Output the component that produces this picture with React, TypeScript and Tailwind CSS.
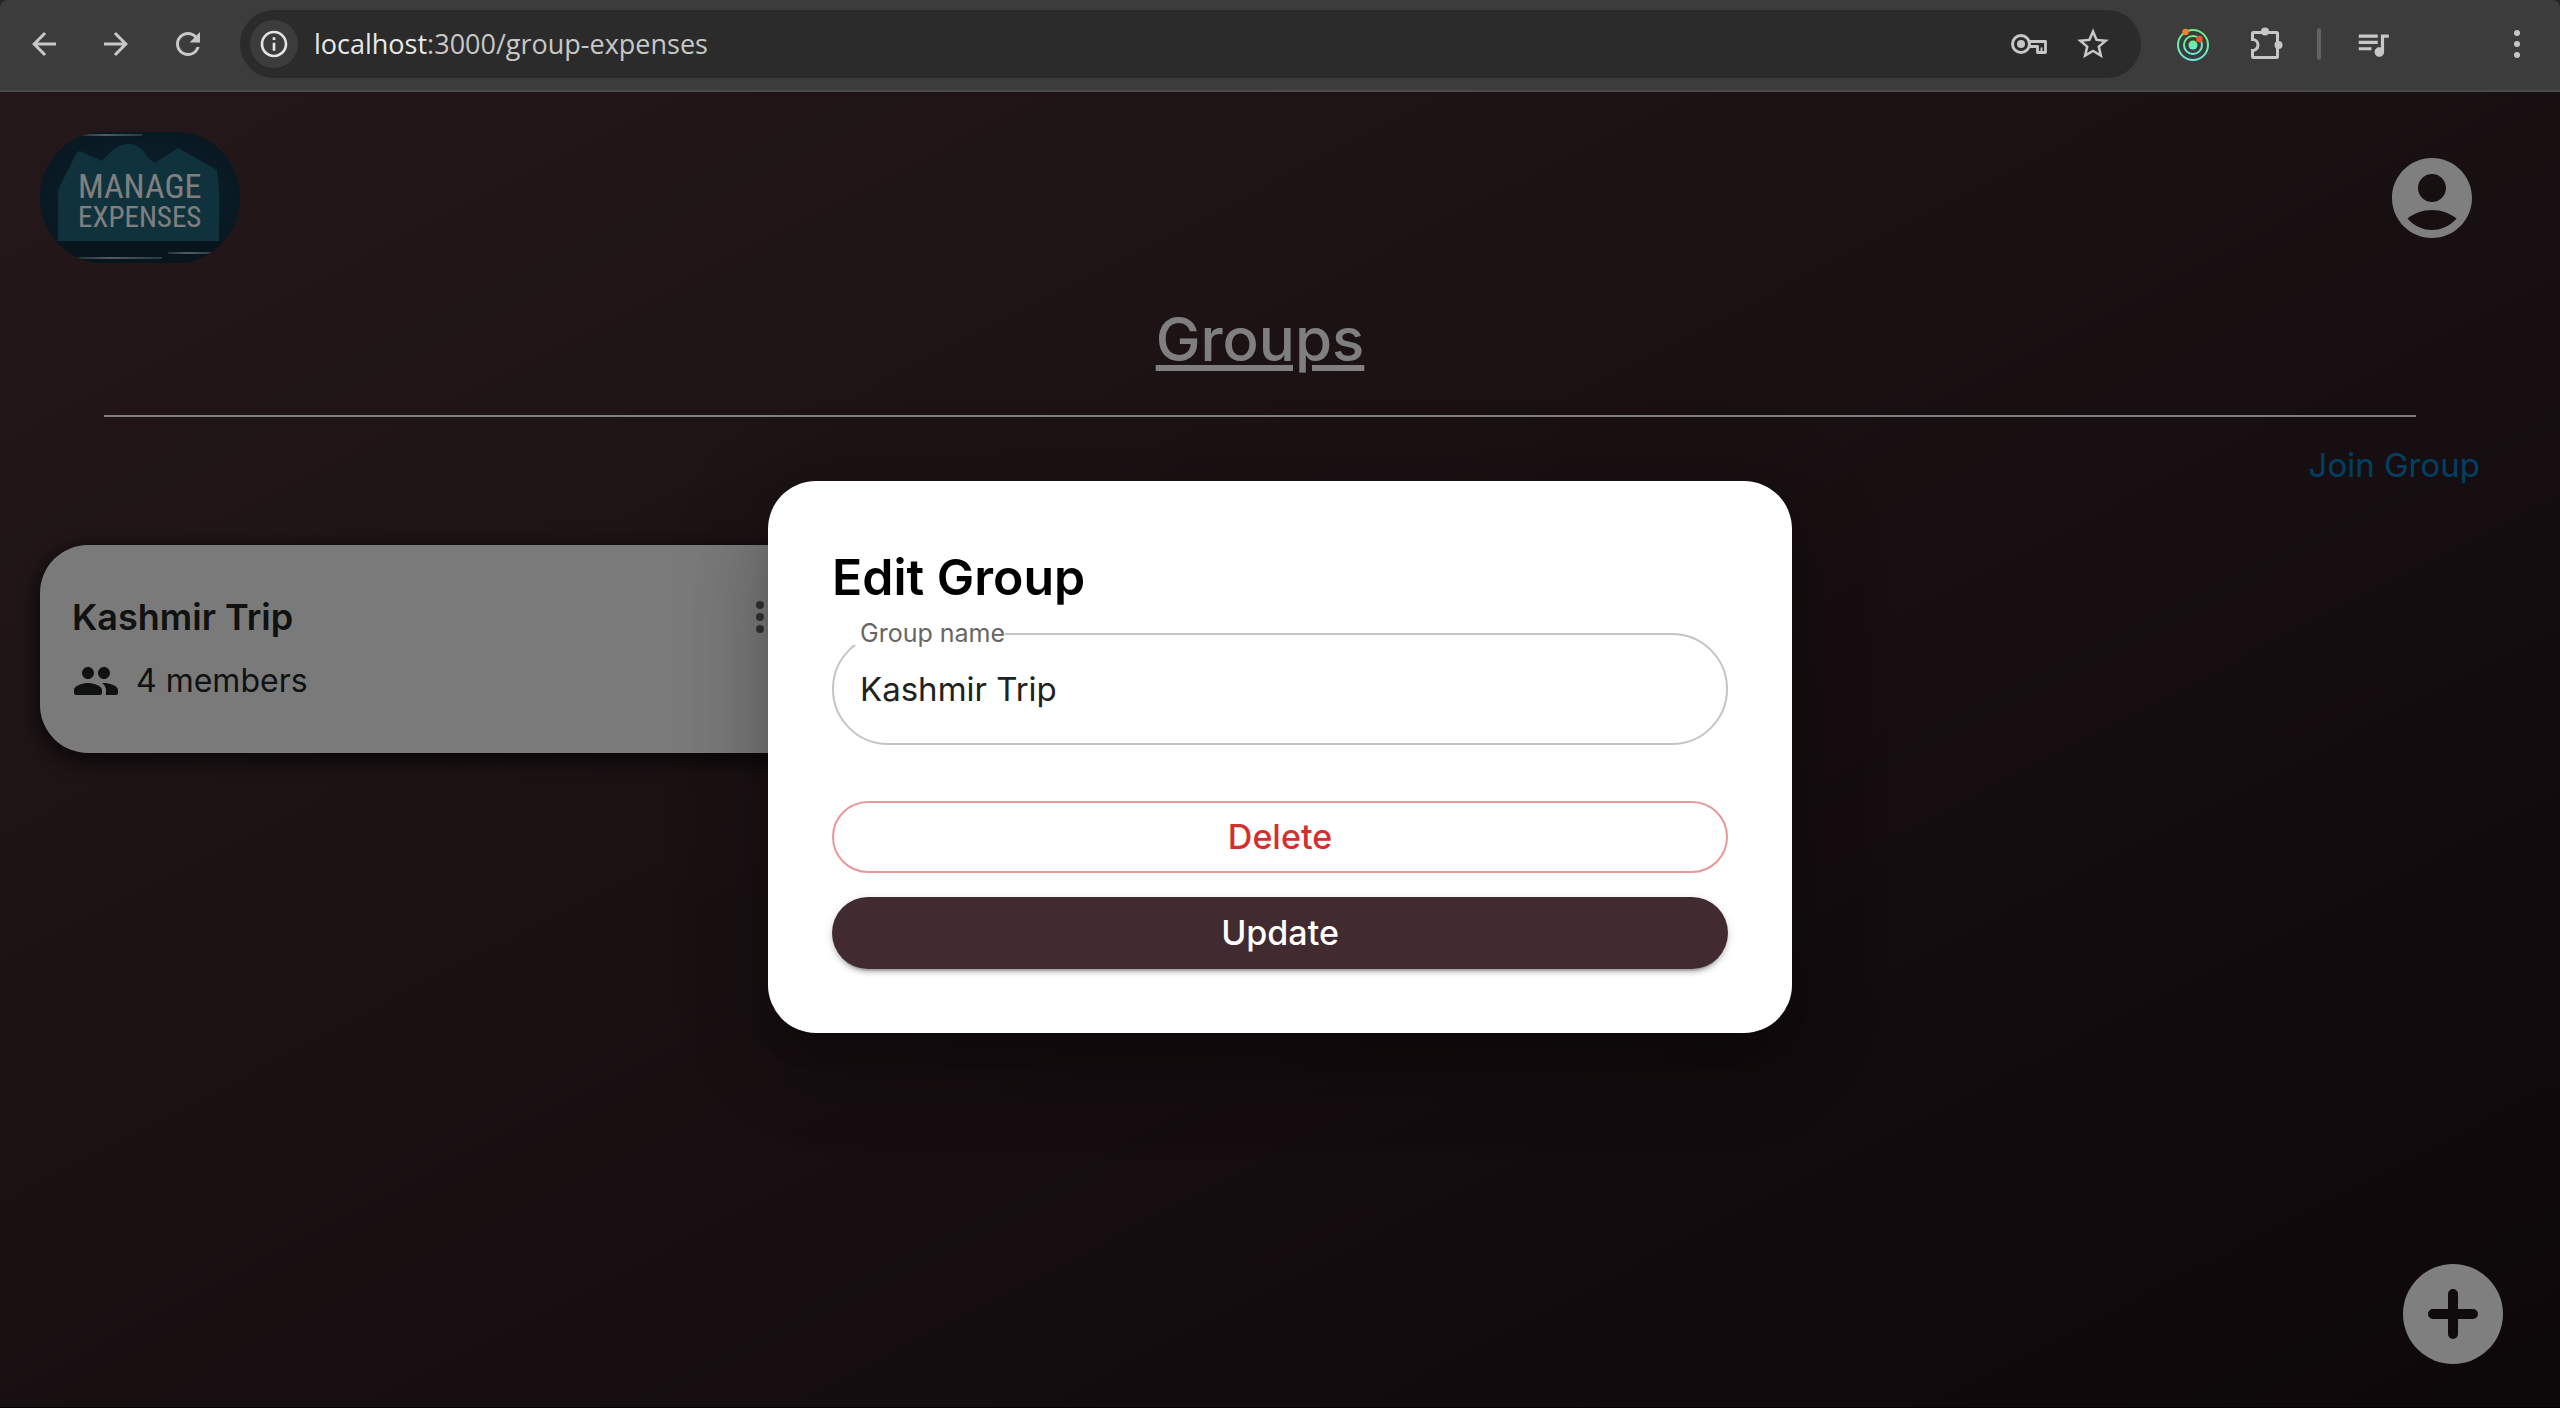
import type { ReactNode } from "react";
import {
  MdArrowBack,
  MdArrowForward,
  MdInfoOutline,
  MdQueueMusic,
  MdRefresh,
  MdStarBorder,
} from "react-icons/md";

function IconButton({
  label,
  className = "",
  children,
}: {
  label: string;
  className?: string;
  children: ReactNode;
}) {
  return (
    <button
      type="button"
      aria-label={label}
      className={`flex shrink-0 items-center justify-center ${className}`}
    >
      {children}
    </button>
  );
}

function KeyIcon() {
  return (
    <svg width="38" height="22" viewBox="0 0 38 22" fill="none" stroke="currentColor">
      <circle cx="11" cy="11" r="8.5" strokeWidth="3" />
      <circle cx="11" cy="11" r="4" fill="currentColor" stroke="none" />
      <path d="M18.5 8.5H35.5V19.5H27.5V13.5H18.5" strokeWidth="2.8" strokeLinejoin="round" />
      <path d="M31.5 14.5V19" strokeWidth="2" />
    </svg>
  );
}

function RadarIcon() {
  return (
    <svg width="32" height="34" viewBox="0 0 32 34" fill="none">
      <defs>
        <linearGradient id="radar" x1="0" y1="0" x2="0" y2="1">
          <stop offset="0" stopColor="#6ff07c" />
          <stop offset="1" stopColor="#6ae8dc" />
        </linearGradient>
      </defs>
      <circle cx="16" cy="18" r="15" stroke="url(#radar)" strokeWidth="2" />
      <circle cx="16" cy="18" r="9" stroke="url(#radar)" strokeWidth="2" />
      <circle cx="16" cy="18" r="4.5" fill="url(#radar)" />
      <circle cx="8.5" cy="5" r="3.2" fill="#f5802c" />
      <circle cx="22.5" cy="12" r="3.2" fill="#f0532d" />
    </svg>
  );
}

function PuzzleIcon() {
  return (
    <svg width="34" height="34" viewBox="0 0 34 34" fill="none">
      <path
        d="M2.5 12.5V6.5Q2.5 5.5 3.5 5.5H26.5Q27.5 5.5 27.5 6.5V29.5Q27.5 30.5 26.5 30.5H3.5Q2.5 30.5 2.5 29.5V23.5A5.5 5.5 0 0 0 2.5 12.5Z"
        stroke="currentColor"
        strokeWidth="3"
      />
      <path d="M2.5 14.2V21.8" stroke="#3c3c3c" strokeWidth="3.4" />
      <circle cx="15" cy="4.5" r="4" fill="currentColor" />
      <circle cx="28.5" cy="18" r="4" fill="currentColor" />
    </svg>
  );
}

function DotsIcon() {
  return (
    <svg width="32" height="32" viewBox="0 0 32 32" fill="currentColor">
      <circle cx="16" cy="5" r="3" />
      <circle cx="16" cy="16" r="3" />
      <circle cx="16" cy="27" r="3" />
    </svg>
  );
}

function BrowserBar() {
  return (
    <div className="shrink-0 bg-[#252525]">
      <div className="flex h-[92px] items-center rounded-t-lg border-b-2 border-[#4a4a4a] bg-[#3c3c3c] pb-0.5 pl-6 text-[#c7c7c7]">
        <div className="flex items-center gap-8">
          <IconButton label="Back" className="size-10">
            <MdArrowBack size={36} />
          </IconButton>
          <IconButton label="Forward" className="size-10">
            <MdArrowForward size={36} />
          </IconButton>
          <IconButton label="Reload" className="size-10">
            <MdRefresh size={36} />
          </IconButton>
        </div>
        <div className="ml-8 flex h-[68px] flex-1 items-center rounded-full bg-[#2b2b2b] pr-7 pl-[10px]">
          <IconButton label="Site information" className="size-12 rounded-full bg-[#3c3c3c] text-[#e3e3e3]">
            <MdInfoOutline size={32} />
          </IconButton>
          <div className="ml-4 flex-1 font-['Open_Sans',sans-serif] text-[27px] leading-9 text-[#c7c7c7]">
            <span className="text-[#e8e8e8]">localhost</span>:3000/group-expenses
          </div>
          <div className="flex items-center gap-6">
            <IconButton label="Passwords" className="size-10">
              <KeyIcon />
            </IconButton>
            <IconButton label="Bookmark" className="size-10">
              <MdStarBorder size={38} />
            </IconButton>
          </div>
        </div>
        <div className="flex items-center pr-[23px] pl-8">
          <IconButton label="Radar extension" className="size-10">
            <RadarIcon />
          </IconButton>
          <IconButton label="Extensions" className="ml-[34px] size-10">
            <PuzzleIcon />
          </IconButton>
          <div className="ml-[30px] h-8 w-1 rounded-full bg-[#636363]" />
          <IconButton label="Media controls" className="ml-8 size-10">
            <MdQueueMusic size={38} />
          </IconButton>
          <IconButton label="Menu" className="ml-[104px] size-10">
            <DotsIcon />
          </IconButton>
        </div>
      </div>
    </div>
  );
}

function Logo() {
  return (
    <a href="#home" aria-label="Manage Expenses" className="h-[131px] w-[200px] overflow-hidden rounded-[64px]">
      <svg width="200" height="131" viewBox="0 0 200 131">
        <defs>
          <radialGradient id="logoBg" cx="0.5" cy="0.5" r="0.6">
            <stop offset="0" stopColor="#16425a" />
            <stop offset="0.7" stopColor="#13364a" />
            <stop offset="1" stopColor="#122d3e" />
          </radialGradient>
          <linearGradient id="logoLine" x1="0" x2="1">
            <stop offset="0" stopColor="#3d6478" />
            <stop offset="0.4" stopColor="#a5b7c0" />
            <stop offset="1" stopColor="#4f7284" />
          </linearGradient>
        </defs>
        <rect width="200" height="131" fill="url(#logoBg)" />
        <rect y="109" width="200" height="22" fill="#122a3a" />
        <path
          d="M18 109V60Q20 52 24 46L36 22Q38 18 42 20L62 29C72 18 78 12 90 12C102 12 106 26 115 31L138 16L177 38L179 60V109Z"
          fill="#216478"
        />
        <rect x="40" y="2" width="62" height="2" fill="url(#logoLine)" />
        <rect x="36" y="125" width="86" height="2" fill="url(#logoLine)" />
        <rect x="128" y="120" width="48" height="2" fill="url(#logoLine)" />
        <text x="38" y="66" fill="#ffffff" className="font-['Roboto_Condensed',sans-serif] text-[34px]">
          MANAGE
        </text>
        <text x="38" y="95" fill="#ffffff" className="font-['Roboto_Condensed',sans-serif] text-[29px]">
          EXPENSES
        </text>
      </svg>
    </a>
  );
}

function AccountIcon() {
  return (
    <svg width="96" height="96" viewBox="0 0 24 24" fill="currentColor">
      <path d="M12 2C6.48 2 2 6.48 2 12s4.48 10 10 10 10-4.48 10-10S17.52 2 12 2zm0 4c1.93 0 3.5 1.57 3.5 3.5S13.93 13 12 13s-3.5-1.57-3.5-3.5S10.07 6 12 6zm0 14c-2.03 0-4.43-.82-6.14-2.88C7.55 15.8 9.68 15 12 15s4.45.8 6.14 2.12C16.43 19.18 14.03 20 12 20z" />
    </svg>
  );
}

function MembersIcon() {
  return (
    <svg width="48" height="48" viewBox="0 0 24 24" fill="currentColor">
      <path d="M16 11c1.66 0 2.99-1.34 2.99-3S17.66 5 16 5s-3 1.34-3 3 1.34 3 3 3m-8 0c1.66 0 2.99-1.34 2.99-3S9.66 5 8 5 5 6.34 5 8s1.34 3 3 3m0 2c-2.33 0-7 1.17-7 3.5V18c0 .55.45 1 1 1h12c.55 0 1-.45 1-1v-1.5c0-2.33-4.67-3.5-7-3.5m8 0c-.29 0-.62.02-.97.05.02.01.03.03.04.04 1.14.83 1.93 1.94 1.93 3.41V18c0 .35-.07.69-.18 1H22c.55 0 1-.45 1-1v-1.5c0-2.33-4.67-3.5-7-3.5" />
    </svg>
  );
}

function GroupCard({ name, members }: { name: string; members: number }) {
  return (
    <article className="w-[780px] rounded-[48px] bg-[#f4f5f7] p-8 pt-10 text-[#212423] shadow-[0_6px_18px_4px_rgba(0,0,0,0.6)]">
      <div className="flex items-center justify-between">
        <h2 className="text-[36px] leading-[64px] font-semibold">{name}</h2>
        <button type="button" aria-label={`Options for ${name}`} className="mr-1 text-[#666]">
          <svg width="48" height="48" viewBox="0 0 24 24" fill="currentColor">
            <circle cx="12" cy="6" r="2" />
            <circle cx="12" cy="12" r="2" />
            <circle cx="12" cy="18" r="2" />
          </svg>
        </button>
      </div>
      <div className="flex h-[72px] items-center gap-4 pb-2 text-[32px]">
        <MembersIcon />
        <span>{members} members</span>
      </div>
    </article>
  );
}

function GroupsPage() {
  return (
    <div className="flex flex-1 flex-col bg-linear-to-br from-[#4a3034] to-[#1a1014] pt-10 pr-20 pl-10">
      <header className="flex items-center justify-between">
        <Logo />
        <button type="button" aria-label="Account" className="text-white">
          <AccountIcon />
        </button>
      </header>
      <h1 className="mt-9 text-center text-[60px] leading-[80px] font-medium text-white underline decoration-[6px] underline-offset-[4px]">
        Groups
      </h1>
      <hr className="mx-16 mt-9 border-t-2 border-white" />
      <a href="#join" className="mt-6 self-end text-[33px] leading-[48px] text-[#0080c6]">
        Join Group
      </a>
      <main className="mt-14">
        <GroupCard name="Kashmir Trip" members={4} />
      </main>
    </div>
  );
}

function EditGroupDialog() {
  return (
    <div className="absolute inset-0 flex items-center justify-center bg-black/50 pt-[14px]">
      <form
        role="dialog"
        aria-modal="true"
        aria-labelledby="edit-title"
        className="flex w-2/5 flex-col rounded-[48px] bg-white p-16 shadow-[0_22px_30px_-14px_rgba(0,0,0,0.2),0_48px_76px_6px_rgba(0,0,0,0.14),0_18px_92px_16px_rgba(0,0,0,0.12)]"
      >
        <h2 id="edit-title" className="text-[50px] leading-[64px] font-semibold text-black">
          Edit Group
        </h2>
        <div className="relative mt-6">
          <label
            htmlFor="group-name"
            className="absolute -top-3 left-4 h-6 bg-white pl-3 text-[25px] leading-6 text-[#666]"
          >
            Group name
          </label>
          <input
            id="group-name"
            type="text"
            defaultValue="Kashmir Trip"
            className="block h-28 w-full rounded-full border-2 border-[#c4c4c4] px-[26px] text-[33px] text-[#212121] outline-none"
          />
        </div>
        <button
          type="button"
          className="mt-14 h-[72px] rounded-full border-2 border-[#ea9797] text-[34px] font-medium text-[#d32f2f]"
        >
          Delete
        </button>
        <button
          type="submit"
          className="mt-6 h-[72px] rounded-full bg-[#412a30] text-[34px] font-medium text-white shadow-[0_6px_2px_-4px_rgba(0,0,0,0.2),0_4px_4px_0_rgba(0,0,0,0.14),0_2px_10px_0_rgba(0,0,0,0.12)]"
        >
          Update
        </button>
      </form>
    </div>
  );
}

export default function App() {
  return (
    <div className="flex min-h-screen flex-col bg-[#1a1013] font-['Inter',sans-serif]">
      <BrowserBar />
      <div className="relative flex flex-1 flex-col border-b border-black">
        <GroupsPage />
        <button
          type="button"
          aria-label="Add group"
          className="absolute right-[57px] bottom-[43px] flex size-[100px] items-center justify-center rounded-full bg-white"
        >
          <svg width="50" height="50" viewBox="0 0 50 50" stroke="#1f1418" strokeWidth="10" strokeLinecap="round">
            <path d="M25 5V45M5 25H45" />
          </svg>
        </button>
        <EditGroupDialog />
      </div>
    </div>
  );
}
